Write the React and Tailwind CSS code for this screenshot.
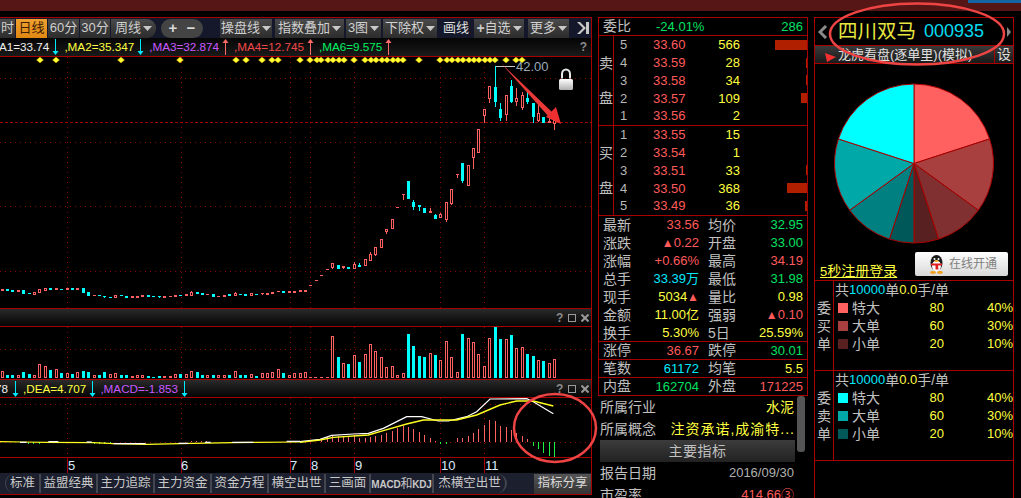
import React from "react";

const RED = "#ff6060";
const CY = "#00ffff";

const z1 = [
  [7,148,153,"r"],[22,147,153,"c"],[37,150,156,"c"],[55,150,156,"r"],[70,150,162,"c"],[88,159,162,"c"],[103,156,165,"r"],[118,147,159,"r"],[136,144,153,"r"],[151,144,150,"c"],[169,144,150,"r"],[184,147,150,"c"],[202,144,150,"r"],[217,144,150,"c"],[232,144,150,"r"],[250,144,159,"c"],[265,156,168,"c"],[283,166,168,"r"],[298,166,168,"c"],[313,168,171,"c",168,174],[331,171,174,"c"],[346,165,174,"r"],[364,166,168,"c"],[379,168,174,"c"],[397,168,174,"r"],[412,168,174,"r"],[427,165,171,"r"],[445,165,171,"c"],[460,168,171,"c"],[478,168,171,"c",168,174],[493,168,174,"r"],[511,168,171,"r"],[526,165,171,"r"],[541,165,168,"c"],[559,162,168,"r"],[574,156,168,"r",153,168],[592,156,162,"c"],[607,159,165,"c"],[622,162,165,"r"],[640,162,171,"c"],[655,168,171,"r"],[673,165,171,"r"],[688,162,168,"c"],[706,159,168,"r",156,168],[721,162,165,"c"],[736,162,168,"c"],[754,159,168,"r"],[769,162,165,"c"],[787,159,162,"r",159,165],[802,159,165,"r"],[817,156,162,"r"],[835,153,156,"r"],[850,153,159,"c"],[868,153,159,"r"],[883,153,159,"r"],[901,150,156,"r"],[916,150,156,"r"],[931,135,137,"r"],[949,120,122,"r"],[964,105,107,"r"],[982,87,89,"r"],
].map(([x,t,b,c,wt,wb]) => ({ x:x/3, t:240+t/3, b:240+b/3, c, wt: wt?240+wt/3:null, wb: wb?240+wb/3:null }));

const z2 = [
  [97,625,638,"r",625,641],[115,631,641,"c"],[130,634,638,"r",634,641],[145,636,641,"c"],[163,628,641,"r",622,641],[178,630,636,"c",625,636],[196,613,632,"r"],[211,598,617,"r",592,617],[226,577,600,"r",577,603],[244,553,578,"r"],[259,523,530,"r",523,537],[277,493,521,"r"],[292,456,458,"r"],[310,418,420,"r",418,435],[325,378,432,"c"],[340,442,456,"c",436,465],[358,451,456,"c",451,468],[373,460,473,"c"],[391,468,473,"r",460,473],[406,480,491,"c",478,491],[421,478,488,"r",475,488],[439,442,495,"r",442,500],[454,403,447,"r",403,450],[472,358,360,"r",358,369],[487,324,378,"c",324,384],[505,331,392,"r"],[520,280,308,"r",280,342],[535,223,293,"r"],[553,163,182,"r",163,204],[568,94,132,"r",94,144],[586,96,141,"c",34,156],[601,162,189,"c",144,198],[619,121,181,"r",121,198],[634,94,141,"c",75,144],[649,130,141,"r",98,153],[667,121,159,"r",112,164],[682,129,141,"c",112,147],[700,144,186,"c",144,204],[715,175,199,"r",150,200],[730,186,204,"c"],[748,198,204,"r",183,204],[763,196,206,"r",196,225],
].map(([x,t,b,c,wt,wb]) => ({ x:300+x/3, t:55+t/3, b:55+b/3, c, wt: wt?55+wt/3:null, wb: wb?55+wb/3:null }));

const candles = [...z1, ...z2];

const vol1 = [[7,214,"r"],[22,224,"c"],[37,224,"c"],[55,224,"r"],[70,216,"c"],[88,222,"c"],[103,224,"r"],[118,192,"r"],[136,198,"r"],[151,210,"c"],[169,208,"r"],[184,219,"c"],[202,220,"r"],[217,222,"c"],[232,216,"r"],[250,213,"c"],[265,216,"c"],[283,226,"r"],[298,224,"c"],[313,216,"c"],[331,222,"r"],[346,220,"r"],[364,225,"c"],[379,226,"c"],[397,228,"r"],[412,226,"r"],[427,226,"r"],[445,229,"c"],[460,230,"c"],[478,229,"c"],[493,229,"r"],[511,228,"r"],[526,221,"r"],[541,221,"c"],[559,222,"r"],[574,213,"r"],[592,216,"c"],[607,224,"c"],[622,226,"r"],[640,224,"c"],[655,226,"r"],[673,226,"r"],[688,224,"c"],[706,214,"r"],[721,226,"c"],[736,225,"c"],[754,222,"r"],[769,229,"c"],[787,220,"r"],[802,220,"r"],[817,217,"r"],[835,208,"r"],[850,218,"c"],[868,224,"r"],[883,220,"r"]]
  .map(([x,t,c]) => ({ x:x/3, t:300+t/3, c }));
const vol2 = [[1,220,"r"],[16,216,"r"],[31,231,"r"],[46,231,"r"],[64,231,"r"],[82,231,"r"],[97,108,"r"],[115,171,"c"],[130,189,"r"],[145,192,"c"],[163,165,"r"],[178,186,"c"],[196,162,"r"],[211,132,"r"],[226,153,"r"],[244,171,"r"],[259,201,"r"],[277,198,"r"],[292,226,"r"],[310,220,"r"],[325,102,"c"],[340,138,"c"],[358,168,"c"],[373,171,"c"],[391,159,"r"],[406,165,"c"],[421,180,"r"],[439,123,"r"],[454,171,"r"],[472,216,"r"],[487,102,"c"],[505,114,"r"],[520,126,"r"],[535,162,"r"],[553,198,"r"],[568,114,"r"],[586,78,"c"],[601,117,"c"],[619,117,"r"],[634,105,"c"],[649,144,"r"],[667,141,"r"],[682,162,"c"],[700,168,"c"],[715,180,"r"],[730,183,"c"],[748,189,"r"],[763,177,"r"]]
  .map(([x,t,c]) => ({ x:300+x/3, t:300+t/3, c }));
const vols = [...vol1, ...vol2];

const macdRed = [[64,417],[82,411],[97,408],[115,408],[130,408],[145,410],[163,405],[178,413],[196,413],[211,411],[226,407],[244,405],[259,398],[277,392],[292,385],[310,378],[325,380],[340,386],[358,396],[373,406],[391,414],[406,424],[454,425],[472,415],[487,414],[505,408],[520,398],[535,386],[553,375],[568,360],[586,363],[601,378],[619,380],[634,390],[649,398],[667,408],[682,417]];
const macdGreen = [[700,437],[715,448],[730,460],[748,467],[763,470],[421,431],[439,431]];

const pts = (arr, ox) => arr.map(([x, y]) => `${ox + x / 3},${300 + y / 3}`).join(" ");
const whiteLine = [[0,425],[60,418],[95,406],[160,402],[205,400],[250,385],[320,350],[365,350],[415,363],[445,363],[500,350],[530,335],[570,297],[680,296],[700,305],[760,341]];
const yellowLine = [[0,427],[60,420],[100,412],[205,405],[250,392],[320,372],[370,360],[470,360],[530,345],[600,315],[650,303],[700,303],[760,318]];
const yellowLeft = [[0,425],[70,426],[140,427],[280,428],[340,431],[440,433],[540,431],[700,428],[900,426]];
const whiteBits = [[60,80,427],[145,175,425],[260,275,426],[340,437,431],[535,565,430],[615,632,427],[697,760,427],[860,900,424]];

const diamonds = [40,56,121,180,236,246,262,272,278,300,310,317,321,328,333,339,344,354,365,371,376,382,387,393,398,403,419,440,447,452,458,463,469,474,479,485,490,495,506,516,522];
const gridX = [67,181,290,310,354,440,484];

function Candle({ d }) {
  const a = Math.round(d.x) - 1;
  const col = d.c === "r" ? RED : CY;
  const t = Math.round(d.t), b = Math.round(d.b);
  return (
    <g>
      {d.wt != null && <line x1={a + 1.5} x2={a + 1.5} y1={Math.round(d.wt)} y2={Math.round(d.wb)} stroke={col} />}
      {d.c === "r" && b - t > 2 ? (
        <rect x={a + 0.5} y={t + 0.5} width={2} height={b - t - 1} fill="#000" stroke={col} />
      ) : (
        <rect x={a} y={t} width={3} height={Math.max(1, b - t)} fill={col} />
      )}
    </g>
  );
}

function Grid({ y0, y1, rows }) {
  return (
    <g stroke="#8a0000" strokeDasharray="1 4">
      {gridX.map((x) => <line key={x} x1={x + 0.5} x2={x + 0.5} y1={y0} y2={y1} />)}
      {rows.map((y) => <line key={y} x1={0} x2={591} y1={y + 0.5} y2={y + 0.5} />)}
    </g>
  );
}

function Caret() {
  return <svg width="9" height="5" viewBox="0 0 9 5" className="ml-[2px] shrink-0"><path d="M0 0h9L4.5 5z" fill="#c8c8c8" /></svg>;
}

function Arrow({ up }) {
  const c = up ? "#ff6a6a" : "#00eaff";
  return (
    <svg width="7" height="16" viewBox="0 0 7 16" className="shrink-0">
      {up ? <path d="M3.5 0L6.5 4H4V16H3V4H0.5z" fill={c} /> : <path d="M3 0h1v12h2.5L3.5 16 0.5 12H3z" fill={c} />}
    </svg>
  );
}

function Btn({ w, ml = 0, caret, children, cls = "" }) {
  return (
    <div
      style={{ width: w, marginLeft: ml }}
      className={`h-[19px] flex items-center justify-center shrink-0 whitespace-nowrap text-[13px] text-[#d0d0d0] bg-gradient-to-b from-[#4a4a4a] to-[#2c2c2c] ${cls}`}
    >
      {children}
      {caret && <Caret />}
    </div>
  );
}

function WinIcons() {
  return (
    <div className="ml-auto flex items-center gap-[5px] mr-[2px]">
      <span className="text-[12px] font-bold text-[#8a8a8a] leading-none w-[7px]">?</span>
      <span className="w-[8px] h-[8px] border-[1.5px] border-[#9a9a9a]" />
      <svg width="8" height="8" viewBox="0 0 8 8"><path d="M0.5 0.5L7.5 7.5M7.5 0.5L0.5 7.5" stroke="#9a9a9a" strokeWidth="2" /></svg>
    </div>
  );
}

function Toolbar() {
  return (
    <div className="h-[20px] flex items-center bg-[#14182a] overflow-hidden">
      <Btn w={15} cls="justify-end pr-[1px]">时</Btn>
      <Btn w={31} ml={1} cls="!from-[#f0a030] !to-[#e08810] !text-[#3a2000]">日线</Btn>
      <Btn w={31} ml={1}>60分</Btn>
      <Btn w={30} ml={1}>30分</Btn>
      <Btn w={45} ml={1} caret cls="rounded-r-[9px]">周线</Btn>
      <div className="w-[42px] ml-[5px] h-[19px] rounded-full bg-[#444] flex items-center justify-around px-[3px] text-[15px] font-bold text-[#d8d8d8] shrink-0">
        <span>+</span><span>−</span>
      </div>
      <Btn w={52} ml={17} caret>操盘线</Btn>
      <Btn w={69} ml={3} caret>指数叠加</Btn>
      <Btn w={35} ml={2} caret>3图</Btn>
      <Btn w={54} ml={2} caret>下除权</Btn>
      <div className="w-[24px] ml-[6px] text-[13px] text-[#e0e0e0] shrink-0 whitespace-nowrap">画线</div>
      <Btn w={50} ml={7} caret><b className="text-[#c8c8c8] text-[14px]">+</b>自选</Btn>
      <Btn w={41} ml={4} caret>更多</Btn>
      <svg width="12" height="12" viewBox="0 0 12 12" className="ml-[8px] shrink-0"><path d="M0 0L6 6 0 12h3L9 6 3 0z M9 0h3v12H9z" fill="#c8c8c8" /></svg>
    </div>
  );
}

function MaRow() {
  const items = [
    ["A1=33.74", "#f0f0f0", false, 0],
    [",MA2=35.347", "#ffff40", false, 5],
    [",MA3=32.874", "#c858ff", true, 5],
    [",MA4=12.745", "#f04848", true, 5],
    [",MA6=9.575", "#00f060", true, 5],
  ];
  return (
    <div className="h-[18px] flex items-center text-[11.7px] bg-gradient-to-b from-[#060606] to-[#1a1a1a] overflow-hidden whitespace-nowrap">
      <div className="flex items-center -ml-[1px]">
        {items.map(([t, c, up, ml]) => (
          <React.Fragment key={t}>
            <span style={{ color: c, marginLeft: ml }}>{t}</span>
            <span style={{ marginLeft: 3 }}><Arrow up={up} /></span>
          </React.Fragment>
        ))}
      </div>
      <span className="ml-auto mr-[4px] text-[12px] font-bold text-[#8a8a8a]">?</span>
    </div>
  );
}

function MainChart() {
  return (
    <svg width="591" height="251" viewBox="0 57 591 251" className="block shrink-0" shapeRendering="crispEdges">
      <Grid y0={57} y1={308} rows={[78, 142, 206, 271]} />
      <line x1="0" x2="591" y1="122.5" y2="122.5" stroke="#a00000" strokeDasharray="3 2" />
      {diamonds.map((x) => (
        <polygon key={x} points={`${x},57 ${x + 3.5},60 ${x},63 ${x - 3.5},60`} fill="#ffff30" stroke="#d09000" strokeWidth="0.4" shapeRendering="auto" />
      ))}
      {candles.map((d, i) => <Candle key={i} d={d} />)}
      <path d="M495.5 66.5H515" stroke="#c8c8c8" fill="none" />
      <text x="516" y="71" fontSize="13" fill="#9aa8b8" fontFamily="Liberation Sans" shapeRendering="auto">42.00</text>
      <g shapeRendering="auto">
        <path d="M501 63L553 113L549 117z" fill="#e83838" />
        <path d="M561 124L546 117L556 107z" fill="#f03030" />
        <path d="M560.5 79v-4.5a4.5 5 0 0 1 10 0v4.5h-2v-4.5a2.5 3 0 0 0-6 0v4.5z" fill="#e8e8e8" transform="translate(0.5 -0.5)" />
        <rect x="559" y="79" width="14" height="11" rx="1.5" fill="url(#lk)" />
        <defs>
          <linearGradient id="lk" x1="0" x2="0" y1="0" y2="1">
            <stop offset="0" stopColor="#ffffff" />
            <stop offset="1" stopColor="#b0b0b0" />
          </linearGradient>
        </defs>
      </g>
    </svg>
  );
}

function VolChart() {
  return (
    <svg width="591" height="52" viewBox="0 327 591 52" className="block shrink-0" shapeRendering="crispEdges">
      <Grid y0={327} y1={379} rows={[349]} />
      {vols.map((d, i) => <Candle key={i} d={{ ...d, b: 378 }} />)}
    </svg>
  );
}

function MacdChart() {
  return (
    <svg width="591" height="59" viewBox="0 398 591 59" className="block shrink-0">
      <g shapeRendering="crispEdges">
        <Grid y0={398} y1={457} rows={[404, 442]} />
        {macdRed.map(([x, y]) => <line key={x} x1={Math.round(300 + x / 3) + 0.5} x2={Math.round(300 + x / 3) + 0.5} y1={300 + y / 3} y2={442} stroke={RED} />)}
        {macdGreen.map(([x, y]) => <line key={x} x1={Math.round(300 + x / 3) + 0.5} x2={Math.round(300 + x / 3) + 0.5} y1={442} y2={300 + y / 3} stroke="#20f040" />)}
        {[85, 100, 118, 283, 298, 313, 331].map((x) => <line key={x} x1={x / 3} x2={x / 3} y1={442} y2={444} stroke="#20f040" />)}
        {[575, 590, 605, 620].map((x) => <line key={x} x1={x / 3} x2={x / 3} y1={441} y2={442} stroke={RED} />)}
      </g>
      <polyline points={pts(yellowLeft, 0)} fill="none" stroke="#ffff20" strokeWidth="1.2" />
      {whiteBits.map(([a, b, y]) => <line key={a} x1={a / 3} x2={b / 3} y1={300 + y / 3} y2={300 + y / 3} stroke="#fff" strokeWidth="1.2" />)}
      <polyline points={pts(whiteLine, 300)} fill="none" stroke="#ffffff" strokeWidth="1.2" />
      <polyline points={pts(yellowLine, 300)} fill="none" stroke="#ffff20" strokeWidth="1.4" />
    </svg>
  );
}

function AxisRow() {
  const labels = [["5", 68], ["6", 181], ["7", 290], ["8", 311], ["9", 355], ["10", 441], ["11", 485]];
  return (
    <svg width="591" height="15" viewBox="0 458 591 15" className="block shrink-0">
      {gridX.map((x) => <line key={x} x1={x + 0.5} x2={x + 0.5} y1={458} y2={473} stroke="#a80000" shapeRendering="crispEdges" />)}
      {labels.map(([t, x]) => <text key={t} x={x} y={470} fontSize="13" fill="#d8ecff" fontFamily="Liberation Sans">{t}</text>)}
    </svg>
  );
}

function Tabs() {
  const tabs = [["标准", 36, "rounded-l-[10px] border-l"], ["益盟经典", 57], ["主力追踪", 57], ["主力资金", 57], ["资金方程", 57], ["横空出世", 57], ["三画面", 45], ["MACD和KDJ", 63], ["杰横空出世", 73, "rounded-r-[10px]"]];
  return (
    <div className="h-[21px] flex items-center bg-[#1c1f2e] pl-[5px] pr-0 overflow-hidden">
      {tabs.map(([t, w, c]) => (
        <div key={t} style={{ width: w }} className={`h-[19px] shrink-0 flex items-center justify-center text-[12.5px] text-[#c8c8c8] whitespace-nowrap border-r-2 border-[#44464f] ${c || ""}`}>
          {t === "MACD和KDJ" ? <span className="text-[10px] font-bold tracking-[-0.2px]">MACD<span className="text-[12px] font-normal">和</span>KDJ</span> : t}
        </div>
      ))}
      <div className="ml-auto w-[57px] h-[20px] shrink-0 flex items-center justify-center text-[12.5px] text-[#d8d8d8] bg-gradient-to-b from-[#555] to-[#333]">指标分享</div>
    </div>
  );
}

function LeftPanel() {
  return (
    <div className="w-[592px] h-[478px] shrink-0 border-t border-r border-b border-[#a80000] flex flex-col">
      <Toolbar />
      <MaRow />
      <div className="border-t border-[#a80000]"><MainChart /></div>
      <div className="h-[18px] border-t border-[#a80000] bg-gradient-to-b from-[#2a2a2a] to-[#060606] flex items-center"><WinIcons /></div>
      <div className="border-t border-[#a80000]"><VolChart /></div>
      <div className="h-[18px] border-t border-[#a80000] bg-gradient-to-b from-[#2a2a2a] to-[#060606] flex items-center text-[11.7px] whitespace-nowrap">
        <span className="text-[#f0f0f0] -ml-[5px]">78</span>
        <span className="ml-[4px]"><Arrow /></span>
        <span className="ml-[4px] text-[#ffff40]">,DEA=4.707</span>
        <span className="ml-[3px]"><Arrow /></span>
        <span className="ml-[4px] text-[#c858ff]">,MACD=-1.853</span>
        <span className="ml-[3px]"><Arrow /></span>
        <WinIcons />
      </div>
      <div className="border-t border-[#a80000]"><MacdChart /></div>
      <div className="border-t border-[#a80000]"><AxisRow /></div>
      <Tabs />
    </div>
  );
}

const sell = [["5", "33.60", "566", 32], ["4", "33.59", "28", 1], ["3", "33.58", "34", 1], ["2", "33.57", "109", 6], ["1", "33.56", "2", 0]];
const buy = [["1", "33.55", "15", 0], ["2", "33.54", "1", 0], ["3", "33.51", "33", 1], ["4", "33.50", "368", 20], ["5", "33.49", "36", 2]];

function Book({ a, b, rows }) {
  return (
    <div className="h-[90px] flex border-b border-[#a80000]">
      <div className="w-[15px] border-r border-[#a80000] flex flex-col justify-around items-center text-[14px] text-[#c0c0c0] leading-none shrink-0 py-[10px]">
        <span>{a}</span><span>{b}</span>
      </div>
      <div className="flex-1 flex flex-col">
        {rows.map(([n, p, q, w]) => (
          <div key={n} className="h-[17.8px] flex items-center text-[13px]">
            <span className="w-[12px] ml-[6px] text-[#b8b8b8]">{n}</span>
            <span className="w-[40px] ml-[21px] text-[#ff5a5a]">{p}</span>
            <span className="w-[47px] text-right text-[#ffff40]">{q}</span>
            <span className="ml-auto h-[10px] bg-[#b02000]" style={{ width: w }} />
          </div>
        ))}
      </div>
    </div>
  );
}

const R = "text-[#ff5a5a]", G = "text-[#00e060]", Y = "text-[#ffff40]", C = "text-[#00e8ff]";

function Stat({ l1, v1, c1, l2, v2, c2, short }) {
  return (
    <div className={`${short ? "h-[17px]" : "h-[18px]"} flex items-center px-[4px] whitespace-nowrap`}>
      <span className="w-[28px] text-[14px] text-[#c0c0c0] shrink-0">{l1}</span>
      <span className={`w-[68px] text-right text-[13px] ${c1}`}>{v1}</span>
      <span className="w-[28px] ml-[9px] text-[14px] text-[#c0c0c0] shrink-0">{l2}</span>
      <span className={`flex-1 text-right text-[13px] ${c2}`}>{v2}</span>
    </div>
  );
}

const Tri = () => <span className="text-[12px] text-[#ff5a5a]">▲</span>;

function QuotePanel() {
  return (
    <div className="w-[210px] shrink-0 ml-[6px] flex flex-col h-[481px]">
      <div className="border-t border-x border-[#a80000]">
        <div className="h-[18px] flex items-center border-b border-[#a80000] px-[4px]">
          <span className="text-[14px] text-[#c0c0c0] w-[28px]">委比</span>
          <span className="text-[13px] text-[#00e060] ml-[25px]">-24.01%</span>
          <span className="text-[13px] text-[#00e060] ml-auto">286</span>
        </div>
        <Book a="卖" b="盘" rows={sell} />
        <Book a="买" b="盘" rows={buy} />
        <div className="h-[126px] border-b border-[#a80000] flex flex-col">
          <Stat l1="最新" v1="33.56" c1={R} l2="均价" v2="32.95" c2={G} />
          <Stat l1="涨跌" v1={<><Tri />0.22</>} c1={R} l2="开盘" v2="33.00" c2={G} />
          <Stat l1="涨幅" v1="+0.66%" c1={R} l2="最高" v2="34.19" c2={R} />
          <Stat l1="总手" v1="33.39万" c1={C} l2="最低" v2="31.98" c2={G} />
          <Stat l1="现手" v1={<>5034<Tri /></>} c1={Y} l2="量比" v2="0.98" c2={Y} />
          <Stat l1="金额" v1="11.00亿" c1={Y} l2="强弱" v2={<><Tri />0.10</>} c2={R} />
          <Stat l1="换手" v1="5.30%" c1={Y} l2="5日" v2="25.59%" c2={Y} />
        </div>
        <div className="border-b border-[#a80000]"><Stat short l1="涨停" v1="36.67" c1={R} l2="跌停" v2="30.01" c2={G} /></div>
        <div className="border-b border-[#a80000]"><Stat short l1="笔数" v1="61172" c1={C} l2="均笔" v2="5.5" c2={Y} /></div>
        <div className="border-b border-[#a80000]"><Stat short l1="内盘" v1="162704" c1={G} l2="外盘" v2="171225" c2={R} /></div>
      </div>
      <div className="flex flex-1 min-h-0 overflow-hidden pl-[2px]">
        <div className="w-[195px] shrink-0 text-[14px] text-[#c0c0c0] whitespace-nowrap">
          <div className="h-[22px] flex items-center justify-between"><span>所属行业</span><span className="text-[#ffff40] mr-[1px]">水泥</span></div>
          <div className="h-[22px] flex items-center justify-between"><span>所属概念</span><span className="text-[#ffff40] tracking-[1px]">注资承诺,成渝特...</span></div>
          <div className="h-[22px] flex items-center justify-center bg-gradient-to-b from-[#3c3c3c] to-[#222] text-[14px] tracking-[0.5px]">主要指标</div>
          <div className="h-[22px] flex items-center justify-between"><span>报告日期</span><span className="text-[13px] text-[#b0b0b0] mr-[1px]">2016/09/30</span></div>
          <div className="h-[22px] flex items-center justify-between"><span>市盈率</span><span className="text-[13px] text-[#ff5a5a] mr-[1px]">414.66③</span></div>
        </div>
        <div className="w-[8px] h-[56px] ml-[2px] bg-[#555] rounded-[3px]" />
      </div>
    </div>
  );
}

function Pie() {
  const cx = 80, cy = 80.5, r = 79.5;
  const sl = [[0, 72, "#ff6060"], [72, 126, "#a84040"], [126, 162, "#803030"], [162, 180, "#582020"], [180, 198, "#005858"], [198, 234, "#008080"], [234, 288, "#00a8a8"], [288, 360, "#00ffff"]];
  const p = (a) => { const t = (a * Math.PI) / 180; return `${cx + r * Math.sin(t)} ${cy - r * Math.cos(t)}`; };
  return (
    <svg width="160" height="162" viewBox="0 0 160 162" className="block mx-auto shrink-0">
      {sl.map(([a, b, c]) => (
        <path key={a} d={`M${cx} ${cy}L${p(a)}A${r} ${r} 0 0 1 ${p(b)}Z`} fill={c} stroke="#a80000" strokeWidth="1" />
      ))}
    </svg>
  );
}

function Penguin() {
  return (
    <svg width="17" height="20" viewBox="0 0 17 20" className="shrink-0">
      <ellipse cx="8.5" cy="9" rx="6" ry="8" fill="#1a1a1a" />
      <ellipse cx="8.5" cy="12" rx="4.5" ry="5.5" fill="#fff" />
      <circle cx="6.5" cy="5" r="1" fill="#fff" /><circle cx="10.5" cy="5" r="1" fill="#fff" />
      <ellipse cx="8.5" cy="7" rx="2.2" ry="1" fill="#f0b020" />
      <path d="M3 9.5h11v2h-4l.5 4h-3V11.5H3z" fill="#e02020" />
      <ellipse cx="5" cy="18.5" rx="3" ry="1.4" fill="#f0a020" /><ellipse cx="12" cy="18.5" rx="3" ry="1.4" fill="#f0a020" />
    </svg>
  );
}

function Orders({ a, sq }) {
  const names = [["特大", "80", "40%"], ["大单", "60", "30%"], ["小单", "20", "10%"]];
  return (
    <div className="h-[90px] flex border-b border-[#a80000]">
      <div className="w-[19px] border-r border-[#a80000] shrink-0 flex flex-col items-center pt-[18px] text-[14px] leading-[18px] text-[#c0c0c0]">
        <span>委</span><span>{a}</span><span>单</span>
      </div>
      <div className="flex-1 pl-[1px]">
        <div className="h-[18px] flex items-center text-[14px] text-[#c0c0c0] whitespace-nowrap">
          共<span className="text-[13px] text-[#00e8ff]">10000</span>单<span className="text-[13px] text-[#ffff40]">0.0</span>手/单
        </div>
        {names.map(([n, v, pc], i) => (
          <div key={n} className="h-[18px] flex items-center whitespace-nowrap">
            <span className="w-[10px] h-[10px] ml-[3px]" style={{ background: sq[i] }} />
            <span className="ml-[4px] w-[28px] text-[14px] text-[#c0c0c0]">{n}</span>
            <span className="w-[64px] text-right text-[13px] text-[#ffff40]">{v}</span>
            <span className="flex-1 text-right text-[13px] text-[#ffff40]">{pc}</span>
          </div>
        ))}
      </div>
    </div>
  );
}

function RightPanel() {
  return (
    <div className="w-[200px] shrink-0 ml-[6px] h-[481px] border-t border-x border-[#a80000] flex flex-col">
      <div className="h-[28px] flex items-center border-b border-[#a80000]">
        <svg width="10" height="14" viewBox="0 0 10 14" className="ml-[3px] shrink-0"><path d="M8 1L2 7l6 6" fill="none" stroke="#8a8a8a" strokeWidth="3" /></svg>
        <span className="ml-[10px] text-[19.5px] text-[#e8e840] whitespace-nowrap">四川双马</span>
        <span className="ml-[8px] text-[18px] text-[#00dcf0]">000935</span>
        <svg width="6" height="10" viewBox="0 0 6 10" className="ml-auto mr-[1px] shrink-0"><path d="M1 0l4 5-4 5z" fill="#8a8a8a" /></svg>
      </div>
      <div className="h-[18px] flex items-center border-b border-[#a80000] bg-gradient-to-b from-[#3a3a3a] to-[#1a1a1a] text-[13px] text-[#e0e0e0] whitespace-nowrap">
        <svg width="11" height="9" viewBox="0 0 11 9" className="ml-[10px] mt-[6px] shrink-0"><path d="M0 0l11 4-9 5z" fill="#f03030" /></svg>
        <span className="ml-[2px]">龙虎看盘(逐单里)(模拟)</span>
        <span className="ml-auto w-[19px] h-full border-l border-[#a80000] text-center text-[14px] leading-[17px]">设</span>
      </div>
      <div className="h-[216px] pt-[19px] flex flex-col">
        <Pie />
        <div className="mt-auto flex items-end justify-between pl-[5px] pr-[5px]">
          <span className="text-[14px] leading-[16px] text-[#ffff40] underline whitespace-nowrap"><span className="text-[13px]">5</span>秒注册登录</span>
          <div className="w-[93px] h-[24px] rounded-[2px] bg-gradient-to-b from-[#ffffff] to-[#d8d8d8] flex items-center pl-[13px] text-[12px] text-[#808080] whitespace-nowrap mb-[4px]">
            <Penguin /><span className="ml-[4px]">在线开通</span>
          </div>
        </div>
      </div>
      <div className="border-t border-[#a80000]">
        <Orders a="买" sq={["#ff6060", "#a84040", "#582020"]} />
        <Orders a="卖" sq={["#00ffff", "#00a8a8", "#005858"]} />
      </div>
    </div>
  );
}

export default function App() {
  return (
    <div className="relative w-[1021px] h-[498px] bg-black overflow-hidden font-['Liberation_Sans','Noto_Sans_CJK_SC',sans-serif]">
      <div className="h-[11px] bg-[#571616] flex justify-end items-start">
        <div className="w-[53px] h-[3px] bg-[#1565a5]" />
      </div>
      <div className="h-[6px]" />
      <div className="flex items-start">
        <LeftPanel />
        <QuotePanel />
        <RightPanel />
      </div>
      <svg className="absolute inset-0 pointer-events-none" width="1021" height="498" viewBox="0 0 1021 498">
        <ellipse cx="917" cy="34" rx="87" ry="30.5" fill="none" stroke="#ee4444" strokeWidth="2.5" />
        <ellipse cx="555" cy="428" rx="41" ry="34" fill="none" stroke="#ee4444" strokeWidth="2.5" />
      </svg>
    </div>
  );
}
